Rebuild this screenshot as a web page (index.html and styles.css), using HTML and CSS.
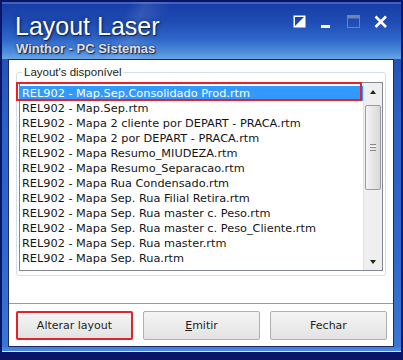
FILE: index.html
```html
<!DOCTYPE html>
<html>

<head>
  <title>Layout Laser</title>
  <link rel="stylesheet" href="styles.css">
</head>

<body>
  <div class="window">
    <div class="titlebar">
      <div class="title-text">
        <h1>Layout Laser</h1>
        <p class="subtitle">Winthor - PC Sistemas</p>
      </div>
      <div class="controls">
        <svg width="14" height="13" viewBox="0 0 14 13">
          <rect x="0.5" y="0.5" width="12" height="12" fill="#fff"/>
          <polygon points="2,2 11,2 2,11" fill="#1b45ad"/>
        </svg>
        <svg width="14" height="13" viewBox="0 0 14 13">
          <rect x="1" y="10" width="9" height="3" fill="#fff"/>
        </svg>
        <svg width="14" height="13" viewBox="0 0 14 13">
          <rect x="0.5" y="0.5" width="12" height="12" fill="none" stroke="#6f82b4"/>
          <rect x="0.5" y="0.5" width="12" height="3" fill="#6f82b4"/>
        </svg>
        <svg width="14" height="13" viewBox="0 0 14 13">
          <path d="M1.5 1.5 L12 12 M12 1.5 L1.5 12" stroke="#fff" stroke-width="2.6"/>
        </svg>
      </div>
    </div>

    <div class="client">
      <div class="panel">
        <fieldset class="group">
          <legend>Layout's disponível</legend>
          <div class="listbox">
            <ul class="items">
              <li class="selected">REL902 - Map.Sep.Consolidado Prod.rtm</li>
              <li>REL902 - Map.Sep.rtm</li>
              <li>REL902 - Mapa 2 cliente por DEPART - PRACA.rtm</li>
              <li>REL902 - Mapa 2 por DEPART - PRACA.rtm</li>
              <li>REL902 - Mapa Resumo_MIUDEZA.rtm</li>
              <li>REL902 - Mapa Resumo_Separacao.rtm</li>
              <li>REL902 - Mapa Rua Condensado.rtm</li>
              <li>REL902 - Mapa Sep. Rua Filial Retira.rtm</li>
              <li>REL902 - Mapa Sep. Rua master c. Peso.rtm</li>
              <li>REL902 - Mapa Sep. Rua master c. Peso_Cliente.rtm</li>
              <li>REL902 - Mapa Sep. Rua master.rtm</li>
              <li>REL902 - Mapa Sep. Rua.rtm</li>
            </ul>
            <div class="scrollbar">
              <div class="arrow"><span class="tri-up"></span></div>
              <div class="track">
                <div class="thumb"><span class="grip"></span></div>
              </div>
              <div class="arrow"><span class="tri-down"></span></div>
            </div>
          </div>
        </fieldset>
      </div>

      <div class="buttons">
        <button class="marked">Alterar layout</button>
        <button><u>E</u>mitir</button>
        <button>Fechar</button>
      </div>
    </div>

    <div class="frame-bottom"></div>
  </div>
</body>

</html>
```

FILE: styles.css
```css
body {
  margin: 0;
  background: #0b1565;
}

.window {
  width: 403px;
  height: 360px;
  box-sizing: border-box;
  border: 2px solid #0b1565;
  display: flex;
  flex-direction: column;
  background: linear-gradient(180deg, #1b43aa 0%, #2a5fc6 30%, #2f68cf 70%, #3a78d8 100%);
}

/* title area with the glass look */
.titlebar {
  height: 57px;
  box-sizing: border-box;
  display: flex;
  justify-content: space-between;
  align-items: flex-start;
  padding: 10px 13px 0 13px;
  background:
    linear-gradient(115deg, rgba(255,255,255,0) 30%, rgba(255,255,255,0.10) 34%, rgba(255,255,255,0) 40%),
    linear-gradient(180deg, #173ca6 0%, #1f4cb4 35%, #2e66c9 65%, #4d8ddc 88%, #6aa6e8 100%);
  box-shadow: inset 0 2px 0 rgba(140,170,235,0.35);
}

.title-text h1 {
  margin: 0;
  font-family: "Liberation Sans", Arial, sans-serif;
  font-weight: normal;
  font-size: 25px;
  line-height: 28px;
  color: #fffcf0;
  text-shadow: 1px 1px 1px #0d1f5c, 0 0 5px rgba(5, 20, 70, 0.7);
}

.subtitle {
  margin: 2px 0 0 1px;
  font-family: "Liberation Sans", Arial, sans-serif;
  font-weight: bold;
  font-size: 13px;
  line-height: 14px;
  color: #dedede;
  text-shadow: 1px 1px 1px #1a2550, 0 0 3px rgba(10, 20, 60, 0.6);
}

.controls {
  display: flex;
  gap: 13px;
  margin-top: 3px;
}

.client {
  margin: 0 7px 0 6px;
  height: 288px;
  box-sizing: border-box;
  border: 1px solid #1c2b5c;
  background: #fff;
  display: flex;
  flex-direction: column;
}

.panel {
  height: 244px;
  box-sizing: border-box;
  border-bottom: 1px solid #9a9a9a;
  padding: 6px 7px 0 7px;
}

.group {
  margin: 0;
  padding: 3px 2px 4px 2px;
  border: 1px solid #d5dfe5;
  border-radius: 3px;
}

.group legend {
  margin-left: 3px;
  padding: 0 2px;
  font-family: "Liberation Sans", Arial, sans-serif;
  font-size: 11.5px;
  line-height: 13px;
  color: #222;
}

.listbox {
  height: 189px;
  box-sizing: border-box;
  border: 1px solid #828790;
  display: flex;
}

.items {
  flex: 1;
  list-style: none;
  margin: 0;
  padding: 3px 0 0 0;
  font-family: "DejaVu Sans", Verdana, sans-serif;
  font-size: 11.3px;
  color: #151515;
}

.items li {
  height: 15px;
  line-height: 15px;
  padding-left: 2px;
  white-space: nowrap;
}

.items li.selected {
  position: relative;
  background: #3399ff;
  color: #fff;
}

/* red mark drawn over the chosen item */
.items li.selected::after {
  content: "";
  position: absolute;
  left: -4px;
  top: -4px;
  right: 1px;
  bottom: 0;
  border: 2px solid #e3222b;
}

.scrollbar {
  width: 18px;
  display: flex;
  flex-direction: column;
  background: #efefef;
  border-left: 1px solid #e2e2e2;
}

.arrow {
  height: 17px;
  display: flex;
  justify-content: center;
  align-items: center;
}

.tri-up {
  border-left: 3.5px solid transparent;
  border-right: 3.5px solid transparent;
  border-bottom: 4px solid #222;
}

.tri-down {
  border-left: 3.5px solid transparent;
  border-right: 3.5px solid transparent;
  border-top: 4px solid #222;
}

.track {
  flex: 1;
  padding-top: 5px;
}

.thumb {
  margin: 0 1px;
  height: 85px;
  box-sizing: border-box;
  border: 1px solid #9c9c9c;
  border-radius: 2px;
  background: linear-gradient(90deg, #f4f4f4, #e4e4e4 60%, #d8d8d8);
  display: flex;
  justify-content: center;
  align-items: center;
}

.grip {
  width: 6px;
  height: 5px;
  border-top: 1px solid #888;
  border-bottom: 1px solid #888;
  background: linear-gradient(#fff 0, #fff 1px, #888 1px, #888 2px, transparent 2px);
  background-position: 0 1px;
  background-repeat: no-repeat;
}

.buttons {
  flex: 1;
  display: grid;
  grid-template-columns: 117px 117px 117px;
  gap: 10px;
  padding: 7px 7px 6px 7px;
}

.buttons button {
  font-family: "DejaVu Sans", Verdana, sans-serif;
  font-size: 11px;
  color: #1e1e1e;
  border: 1px solid #b0b0b0;
  border-radius: 2px;
  background: linear-gradient(180deg, #f4f4f4, #ececec 50%, #e2e2e2);
  padding: 0;
}

.buttons button.marked {
  border: 2px solid #e3222b;
}

.frame-bottom {
  flex: 1;
  background: linear-gradient(180deg, #3f7fdc 0, #4b8ce2 4px, #d7e6f8 4px, #d7e6f8 5px, #0b1565 5px);
}
```
